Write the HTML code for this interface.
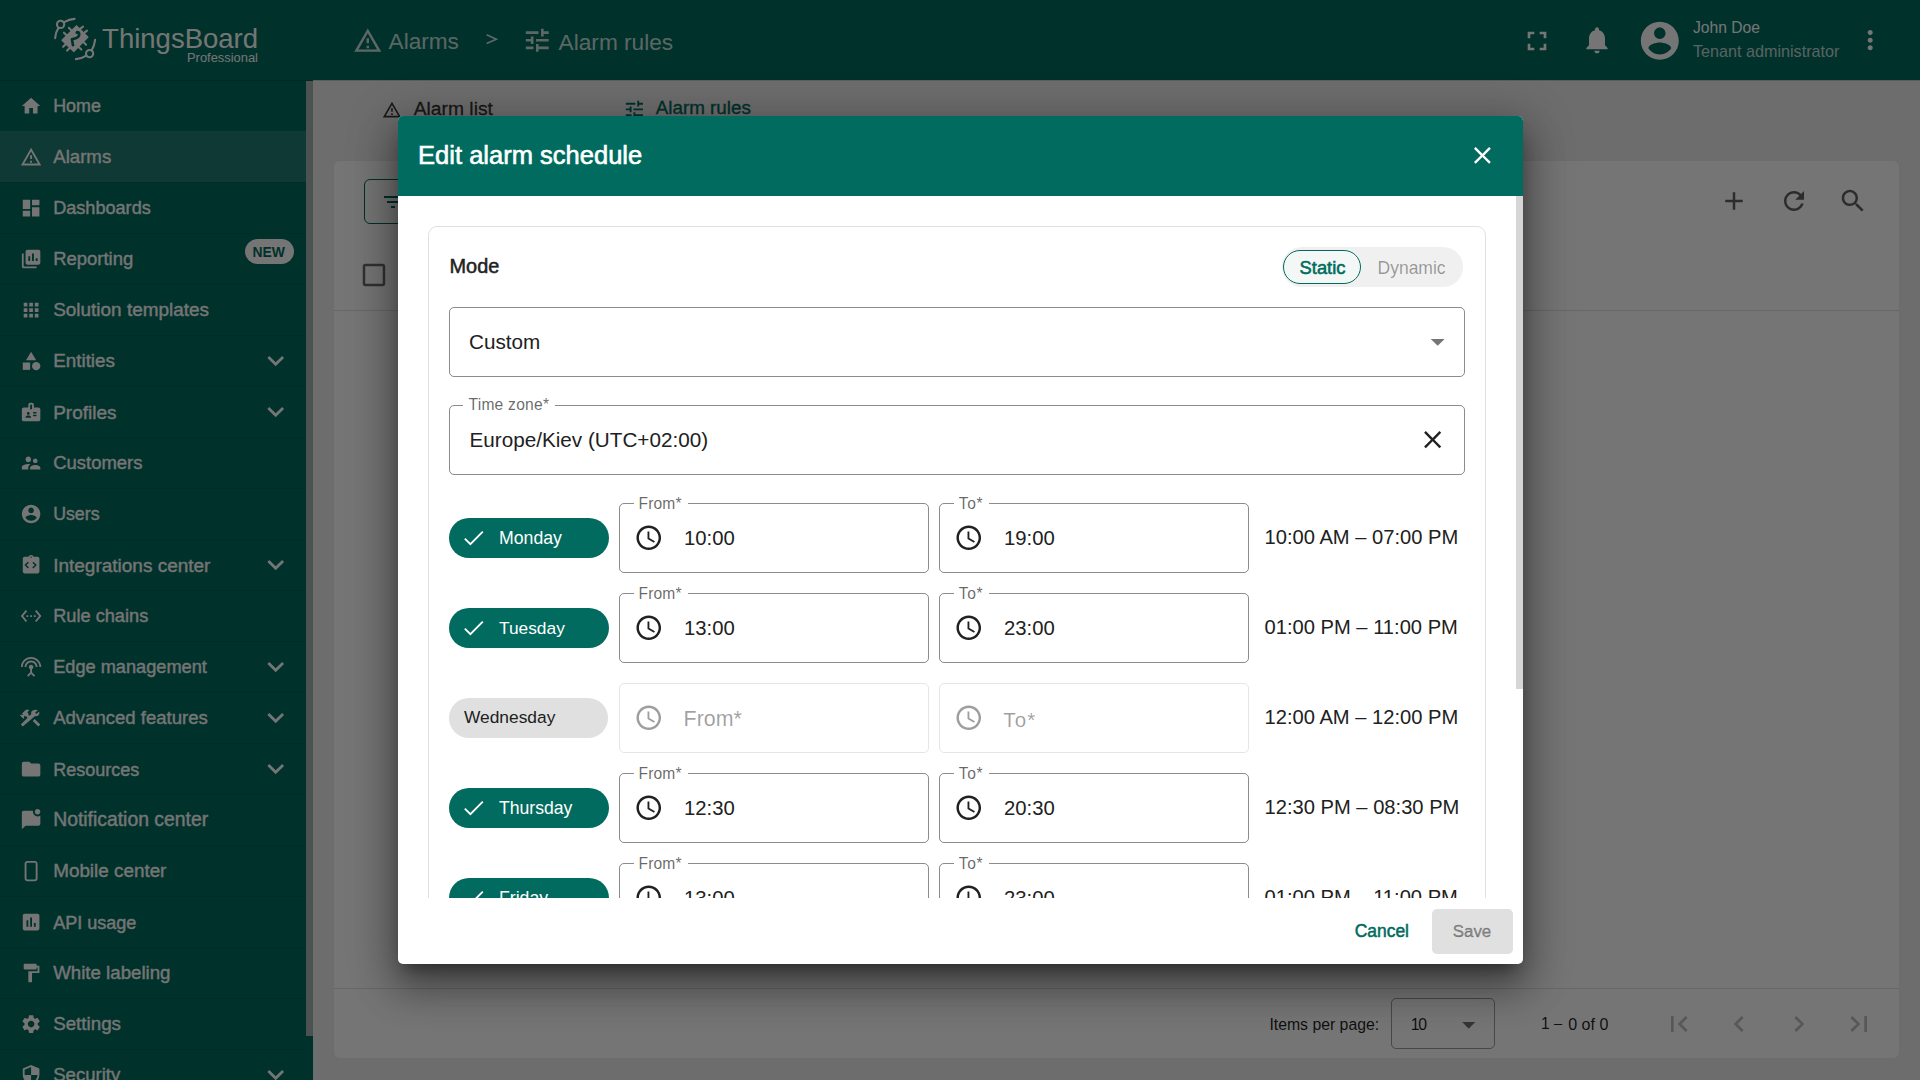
<!DOCTYPE html>
<html><head><meta charset="utf-8">
<style>
*{box-sizing:border-box;margin:0;padding:0}
html,body{width:1920px;height:1080px;overflow:hidden;font-family:"Liberation Sans",sans-serif;background:#eeeeee;position:relative}
.abs{position:absolute}
.tx{white-space:nowrap}
svg{display:block}
.nav{color:#fff;font-weight:bold}
</style></head><body>
<div class="abs" style="left:0;top:0;width:1920px;height:80px;background:#006b5e"></div>
<svg class="abs" style="left:50px;top:14px;width:50px;height:50px" viewBox="0 0 50 50">
<g fill="none" stroke="#fff" stroke-width="2.1" stroke-linecap="round">
<circle cx="10.6" cy="10.4" r="3.6"/><circle cx="39.6" cy="39.6" r="3.6"/>
<path d="M14.2 8.2 Q19 5.4 24.6 4.9"/><path d="M8.6 13.6 Q5.6 18 5.1 24.2"/>
<path d="M41.6 36.4 Q44.4 32 45.1 25.9"/><path d="M36.4 41.6 Q32 44.4 25.9 45.1"/>
<path d="M17.1 21.8 L13.95 18.65 M22 16.9 L18.85 13.75 M29.85 15.15 L33 12.7 M33.85 19.05 L37 16.6 M32.95 27.5 L36.1 30.65 M28.15 32.4 L31.3 35.55 M20.25 33.45 L17.1 36.6 M16.25 29.65 L13.1 32.8"/>
</g>
<path d="M26.4 11.8 L38 23.1 L23.8 37.5 L12 26.2 Z" fill="#fff" stroke="#fff" stroke-width="1.2" stroke-linejoin="round"/>
<path d="M26.4 18.2 Q29.6 17.6 29.2 20.8 Q28.8 23.4 25.8 24.2 L21.9 25.3 L23.2 32.2" fill="none" stroke="#006b5e" stroke-width="2.6" stroke-linejoin="round"/><circle cx="27.2" cy="18.6" r="1.7" fill="#006b5e"/>
</svg>
<div class="abs tx" style="left:102.10px;top:24.52px;font-size:27.50px;line-height:27.50px;color:#fff;font-weight:normal;">ThingsBoard</div>
<div class="abs tx" style="left:187.00px;top:51.78px;font-size:12.90px;line-height:12.90px;color:#fff;font-weight:normal;">Professional</div>
<svg class="abs" style="left:353.17px;top:25.54px;width:29.56px;height:29.56px;fill:rgba(255,255,255,0.8);" viewBox="0 0 24 24"><path d="M12 5.99L19.53 19H4.47L12 5.99M12 2L1 21h22L12 2zm1 14h-2v2h2v-2zm0-6h-2v4h2v-4z"/></svg>
<div class="abs tx" style="left:388.60px;top:30.62px;font-size:22.60px;line-height:22.60px;color:rgba(255,255,255,0.8);font-weight:normal;">Alarms</div>
<svg class="abs" style="left:480px;top:30px;width:24px;height:20px" viewBox="480 30 24 20"><path d="M486.6 34.8 L496.3 39.2 L486.6 43.6" fill="none" stroke="rgba(255,255,255,0.8)" stroke-width="1.7"/></svg>
<svg class="abs" style="left:521.98px;top:24.68px;width:30.53px;height:30.53px;fill:rgba(255,255,255,0.8);" viewBox="0 0 24 24"><path d="M3 17v2h6v-2H3zM3 5v2h10V5H3zm10 16v-2h8v-2h-8v-2h-2v6h2zM7 9v2H3v2h4v2h2V9H7zm14 4v-2H11v2h10zm-6-4h2V7h4V5h-4V3h-2v6z"/></svg>
<div class="abs tx" style="left:558.60px;top:30.56px;font-size:22.67px;line-height:22.67px;color:rgba(255,255,255,0.8);font-weight:normal;">Alarm rules</div>
<svg class="abs" style="left:1521.40px;top:24.70px;width:32.00px;height:32.00px;fill:#fff;" viewBox="0 0 24 24"><path d="M7 14H5v5h5v-2H7v-3zm-2-4h2V7h3V5H5v5zm12 7h-3v2h5v-5h-2v3zM14 5v2h3v3h2V5h-5z"/></svg>
<svg class="abs" style="left:1581.20px;top:24.20px;width:32.00px;height:32.00px;fill:#fff;" viewBox="0 0 24 24"><path d="M12 22c1.1 0 2-.9 2-2h-4c0 1.1.89 2 2 2zm6-6v-5c0-3.07-1.64-5.64-4.5-6.32V4c0-.83-.67-1.5-1.5-1.5s-1.5.67-1.5 1.5v.68C7.63 5.36 6 7.92 6 11v5l-2 2v1h16v-1l-2-2z"/></svg>
<svg class="abs" style="left:1637.20px;top:17.90px;width:45.60px;height:45.60px;fill:#fff;" viewBox="0 0 24 24"><path d="M12 2C6.48 2 2 6.48 2 12s4.48 10 10 10 10-4.48 10-10S17.52 2 12 2zm0 3c1.66 0 3 1.34 3 3s-1.34 3-3 3-3-1.34-3-3 1.34-3 3-3zm0 14.2c-2.5 0-4.71-1.28-6-3.22.03-1.99 4-3.08 6-3.08 1.99 0 5.97 1.09 6 3.08-1.29 1.94-3.5 3.22-6 3.22z"/></svg>
<div class="abs tx" style="left:1693.00px;top:20.05px;font-size:15.65px;line-height:15.65px;color:#fff;font-weight:normal;">John Doe</div>
<div class="abs tx" style="left:1693.00px;top:43.11px;font-size:16.17px;line-height:16.17px;color:rgba(255,255,255,0.75);font-weight:normal;">Tenant administrator</div>
<svg class="abs" style="left:1854.80px;top:24.80px;width:30.40px;height:30.40px;fill:#fff;" viewBox="0 0 24 24"><path d="M12 8c1.1 0 2-.9 2-2s-.9-2-2-2-2 .9-2 2 .9 2 2 2zm0 2c-1.1 0-2 .9-2 2s.9 2 2 2 2-.9 2-2-.9-2-2-2zm0 6c-1.1 0-2 .9-2 2s.9 2 2 2 2-.9 2-2-.9-2-2-2z"/></svg>
<div class="abs" style="left:0;top:80px;width:306px;height:1000px;background:#006b5e"></div>
<div class="abs" style="left:0;top:131px;width:306px;height:51px;background:rgba(255,255,255,0.12)"></div>
<svg class="abs" style="left:20.10px;top:94.80px;width:22.20px;height:22.20px;fill:#fff;" viewBox="0 0 24 24"><path d="M10 20v-6h4v6h5v-8h3L12 3 2 12h3v8z"/></svg>
<div class="abs tx" style="left:53.20px;top:97.68px;font-size:17.87px;line-height:17.87px;color:#fff;font-weight:normal;-webkit-text-stroke:0.35px #fff;">Home</div>
<svg class="abs" style="left:20.10px;top:145.80px;width:22.20px;height:22.20px;fill:#fff;" viewBox="0 0 24 24"><path d="M12 5.99L19.53 19H4.47L12 5.99M12 2L1 21h22L12 2zm1 14h-2v2h2v-2zm0-6h-2v4h2v-4z"/></svg>
<div class="abs tx" style="left:53.20px;top:148.00px;font-size:18.67px;line-height:18.67px;color:#fff;font-weight:normal;-webkit-text-stroke:0.35px #fff;">Alarms</div>
<div class="abs" style="left:0;top:182px;width:306px;height:1px;background:rgba(0,0,0,0.08)"></div>
<svg class="abs" style="left:20.10px;top:196.80px;width:22.20px;height:22.20px;fill:#fff;" viewBox="0 0 24 24"><path d="M3 13h8V3H3v10zm0 8h8v-6H3v6zm10 0h8V11h-8v10zm0-18v6h8V3h-8z"/></svg>
<div class="abs tx" style="left:53.20px;top:199.48px;font-size:18.10px;line-height:18.10px;color:#fff;font-weight:normal;-webkit-text-stroke:0.35px #fff;">Dashboards</div>
<div class="abs" style="left:0;top:233px;width:306px;height:1px;background:rgba(0,0,0,0.08)"></div>
<svg class="abs" style="left:20.10px;top:247.80px;width:22.20px;height:22.20px;fill:#fff;" viewBox="0 0 24 24"><path d="M4 6H2v14c0 1.1.9 2 2 2h14v-2H4V6z"/><path d="M20 2H8c-1.1 0-2 .9-2 2v12c0 1.1.9 2 2 2h12c1.1 0 2-.9 2-2V4c0-1.1-.9-2-2-2zM11 14H9V9h2v5zm4 0h-2V6h2v8zm4 0h-2v-3h2v3z"/></svg>
<div class="abs tx" style="left:53.20px;top:250.17px;font-size:18.47px;line-height:18.47px;color:#fff;font-weight:normal;-webkit-text-stroke:0.35px #fff;">Reporting</div>
<div class="abs" style="left:0;top:284px;width:306px;height:1px;background:rgba(0,0,0,0.08)"></div>
<svg class="abs" style="left:20.10px;top:298.80px;width:22.20px;height:22.20px;fill:#fff;" viewBox="0 0 24 24"><path d="M4 8h4V4H4v4zm6 12h4v-4h-4v4zm-6 0h4v-4H4v4zm0-6h4v-4H4v4zm6 0h4v-4h-4v4zm6-10v4h4V4h-4zm-6 4h4V4h-4v4zm6 6h4v-4h-4v4zm0 6h4v-4h-4v4z"/></svg>
<div class="abs tx" style="left:53.20px;top:300.77px;font-size:18.94px;line-height:18.94px;color:#fff;font-weight:normal;-webkit-text-stroke:0.35px #fff;">Solution templates</div>
<div class="abs" style="left:0;top:335px;width:306px;height:1px;background:rgba(0,0,0,0.08)"></div>
<svg class="abs" style="left:20.10px;top:349.80px;width:22.20px;height:22.20px;fill:#fff;" viewBox="0 0 24 24"><path d="M12 2l-5.5 9h11z"/><circle cx="17.5" cy="17.5" r="4.5"/><path d="M3 13.5h8v8H3z"/></svg>
<div class="abs tx" style="left:53.20px;top:351.85px;font-size:18.84px;line-height:18.84px;color:#fff;font-weight:normal;-webkit-text-stroke:0.35px #fff;">Entities</div>
<svg class="abs" style="left:259.00px;top:343.90px;width:33.40px;height:33.40px;fill:#fff;" viewBox="0 0 24 24"><path d="M16.59 8.59L12 13.17 7.41 8.59 6 10l6 6 6-6z"/></svg>
<div class="abs" style="left:0;top:386px;width:306px;height:1px;background:rgba(0,0,0,0.08)"></div>
<svg class="abs" style="left:20.10px;top:400.80px;width:22.20px;height:22.20px;fill:#fff;" viewBox="0 0 24 24"><path d="M20 7h-5V4c0-1.1-.9-2-2-2h-2c-1.1 0-2 .9-2 2v3H4c-1.1 0-2 .9-2 2v11c0 1.1.9 2 2 2h16c1.1 0 2-.9 2-2V9c0-1.1-.9-2-2-2zM9 12c.83 0 1.5.67 1.5 1.5S9.83 15 9 15s-1.5-.67-1.5-1.5S8.17 12 9 12zm3 6H6v-.43c0-.6.36-1.15.92-1.39.64-.28 1.34-.43 2.08-.43s1.44.15 2.08.43c.55.24.92.78.92 1.39V18zm1-9h-2V4h2v5zm4.25 7.5h-2.5c-.41 0-.75-.34-.75-.75s.34-.75.75-.75h2.5c.41 0 .75.34.75.75s-.34.75-.75.75zm0-3h-2.5c-.41 0-.75-.34-.75-.75s.34-.75.75-.75h2.5c.41 0 .75.34.75.75s-.34.75-.75.75z"/></svg>
<div class="abs tx" style="left:53.20px;top:402.73px;font-size:18.98px;line-height:18.98px;color:#fff;font-weight:normal;-webkit-text-stroke:0.35px #fff;">Profiles</div>
<svg class="abs" style="left:259.00px;top:394.90px;width:33.40px;height:33.40px;fill:#fff;" viewBox="0 0 24 24"><path d="M16.59 8.59L12 13.17 7.41 8.59 6 10l6 6 6-6z"/></svg>
<div class="abs" style="left:0;top:437px;width:306px;height:1px;background:rgba(0,0,0,0.08)"></div>
<svg class="abs" style="left:20.10px;top:451.80px;width:22.20px;height:22.20px;fill:#fff;" viewBox="0 0 24 24"><path d="M16.5 12c1.38 0 2.49-1.12 2.49-2.5S17.88 7 16.5 7C15.12 7 14 8.12 14 9.5s1.12 2.5 2.5 2.5zM9 11c1.66 0 2.99-1.34 2.99-3S10.66 5 9 5C7.34 5 6 6.34 6 8s1.34 3 3 3zm7.5 3c-1.83 0-5.5.92-5.5 2.75V19h11v-2.25c0-1.83-3.67-2.75-5.5-2.75zM9 13c-2.33 0-7 1.17-7 3.5V19h7v-2.25c0-.85.33-2.34 2.37-3.47C10.5 13.1 9.66 13 9 13z"/></svg>
<div class="abs tx" style="left:53.20px;top:454.17px;font-size:18.47px;line-height:18.47px;color:#fff;font-weight:normal;-webkit-text-stroke:0.35px #fff;">Customers</div>
<div class="abs" style="left:0;top:488px;width:306px;height:1px;background:rgba(0,0,0,0.08)"></div>
<svg class="abs" style="left:20.10px;top:502.80px;width:22.20px;height:22.20px;fill:#fff;" viewBox="0 0 24 24"><path d="M12 2C6.48 2 2 6.48 2 12s4.48 10 10 10 10-4.48 10-10S17.52 2 12 2zm0 3c1.66 0 3 1.34 3 3s-1.34 3-3 3-3-1.34-3-3 1.34-3 3-3zm0 14.2c-2.5 0-4.71-1.28-6-3.22.03-1.99 4-3.08 6-3.08 1.99 0 5.97 1.09 6 3.08-1.29 1.94-3.5 3.22-6 3.22z"/></svg>
<div class="abs tx" style="left:53.20px;top:505.78px;font-size:17.74px;line-height:17.74px;color:#fff;font-weight:normal;-webkit-text-stroke:0.35px #fff;">Users</div>
<div class="abs" style="left:0;top:539px;width:306px;height:1px;background:rgba(0,0,0,0.08)"></div>
<svg class="abs" style="left:20.10px;top:553.80px;width:22.20px;height:22.20px;fill:#fff;" viewBox="0 0 24 24"><path d="M19 3h-4.18C14.4 1.84 13.3 1 12 1s-2.4.84-2.82 2H5c-1.1 0-2 .9-2 2v14c0 1.1.9 2 2 2h14c1.1 0 2-.9 2-2V5c0-1.1-.9-2-2-2zm-7-.25c.41 0 .75.34.75.75s-.34.75-.75.75-.75-.34-.75-.75.34-.75.75-.75zM9.6 14.6L8.5 15.7 4.8 12l3.7-3.7 1.1 1.1L7 12l2.6 2.6zm4.8 1.1l-1.1-1.1L16 12l-2.6-2.6 1.1-1.1 3.7 3.7-3.8 3.7z"/></svg>
<div class="abs tx" style="left:53.20px;top:555.73px;font-size:18.99px;line-height:18.99px;color:#fff;font-weight:normal;-webkit-text-stroke:0.35px #fff;">Integrations center</div>
<svg class="abs" style="left:259.00px;top:547.90px;width:33.40px;height:33.40px;fill:#fff;" viewBox="0 0 24 24"><path d="M16.59 8.59L12 13.17 7.41 8.59 6 10l6 6 6-6z"/></svg>
<div class="abs" style="left:0;top:590px;width:306px;height:1px;background:rgba(0,0,0,0.08)"></div>
<svg class="abs" style="left:20.10px;top:604.80px;width:22.20px;height:22.20px;fill:#fff;" viewBox="0 0 24 24"><path d="M7.77 6.76L6.23 5.48.82 12l5.41 6.52 1.54-1.28L3.42 12l4.35-5.24zM7 13h2v-2H7v2zm10-2h-2v2h2v-2zm-6 2h2v-2h-2v2zm6.77-7.52l-1.54 1.28L20.58 12l-4.35 5.24 1.54 1.28L23.18 12l-5.41-6.52z"/></svg>
<div class="abs tx" style="left:53.20px;top:607.40px;font-size:18.19px;line-height:18.19px;color:#fff;font-weight:normal;-webkit-text-stroke:0.35px #fff;">Rule chains</div>
<div class="abs" style="left:0;top:641px;width:306px;height:1px;background:rgba(0,0,0,0.08)"></div>
<svg class="abs" style="left:20.10px;top:655.80px;width:22.20px;height:22.20px;fill:#fff;" viewBox="0 0 24 24"><path d="M12 5c-3.87 0-7 3.13-7 7h2c0-2.76 2.24-5 5-5s5 2.24 5 5h2c0-3.87-3.13-7-7-7zm1 9.29c.88-.39 1.5-1.26 1.5-2.29 0-1.38-1.12-2.5-2.5-2.5S9.5 10.62 9.5 12c0 1.02.62 1.9 1.5 2.29v3.3L7.59 21 9 22.41l3-3 3 3L16.41 21 13 17.59v-3.3zM12 1C5.93 1 1 5.93 1 12h2c0-4.97 4.03-9 9-9s9 4.03 9 9h2c0-6.07-4.93-11-11-11z"/></svg>
<div class="abs tx" style="left:53.20px;top:658.39px;font-size:18.20px;line-height:18.20px;color:#fff;font-weight:normal;-webkit-text-stroke:0.35px #fff;">Edge management</div>
<svg class="abs" style="left:259.00px;top:649.90px;width:33.40px;height:33.40px;fill:#fff;" viewBox="0 0 24 24"><path d="M16.59 8.59L12 13.17 7.41 8.59 6 10l6 6 6-6z"/></svg>
<div class="abs" style="left:0;top:692px;width:306px;height:1px;background:rgba(0,0,0,0.08)"></div>
<svg class="abs" style="left:20.10px;top:706.80px;width:22.20px;height:22.20px;fill:#fff;" viewBox="0 0 24 24"><path d="M13.78 15.17l2.12-2.12 6 6-2.12 2.12zM17.5 10c1.93 0 3.5-1.57 3.5-3.5 0-.58-.16-1.12-.41-1.6l-2.7 2.7-1.49-1.49 2.7-2.7c-.48-.25-1.02-.41-1.6-.41C13.57 3 12 4.57 12 6.5c0 .41.08.8.21 1.16l-1.85 1.85-1.78-1.78.71-.71-1.41-1.41L10 3.49c-1.17-1.17-3.07-1.17-4.24 0L2.22 7.03l1.41 1.41H.81l-.71.71 3.54 3.54.71-.71V9.15l1.41 1.41.71-.71 1.78 1.78-7.41 7.41 2.12 2.12L16.34 9.79c.36.13.75.21 1.16.21z"/></svg>
<div class="abs tx" style="left:53.20px;top:709.09px;font-size:18.56px;line-height:18.56px;color:#fff;font-weight:normal;-webkit-text-stroke:0.35px #fff;">Advanced features</div>
<svg class="abs" style="left:259.00px;top:700.90px;width:33.40px;height:33.40px;fill:#fff;" viewBox="0 0 24 24"><path d="M16.59 8.59L12 13.17 7.41 8.59 6 10l6 6 6-6z"/></svg>
<div class="abs" style="left:0;top:743px;width:306px;height:1px;background:rgba(0,0,0,0.08)"></div>
<svg class="abs" style="left:20.10px;top:757.80px;width:22.20px;height:22.20px;fill:#fff;" viewBox="0 0 24 24"><path d="M10 4H4c-1.1 0-1.99.9-1.99 2L2 18c0 1.1.9 2 2 2h16c1.1 0 2-.9 2-2V8c0-1.1-.9-2-2-2h-8l-2-2z"/></svg>
<div class="abs tx" style="left:53.20px;top:760.56px;font-size:18.00px;line-height:18.00px;color:#fff;font-weight:normal;-webkit-text-stroke:0.35px #fff;">Resources</div>
<svg class="abs" style="left:259.00px;top:751.90px;width:33.40px;height:33.40px;fill:#fff;" viewBox="0 0 24 24"><path d="M16.59 8.59L12 13.17 7.41 8.59 6 10l6 6 6-6z"/></svg>
<div class="abs" style="left:0;top:794px;width:306px;height:1px;background:rgba(0,0,0,0.08)"></div>
<svg class="abs" style="left:20.10px;top:808.80px;width:22.20px;height:22.20px;fill:#fff;" viewBox="0 0 24 24"><path d="M22 6.98V16c0 1.1-.9 2-2 2H6l-4 4V4c0-1.1.9-2 2-2h10.1c-.06.32-.1.66-.1 1 0 2.76 2.24 5 5 5 1.13 0 2.16-.39 3-1.02zM16 3c0 1.66 1.34 3 3 3s3-1.34 3-3-1.34-3-3-3-3 1.34-3 3z"/></svg>
<div class="abs tx" style="left:53.20px;top:810.40px;font-size:19.37px;line-height:19.37px;color:#fff;font-weight:normal;-webkit-text-stroke:0.35px #fff;">Notification center</div>
<div class="abs" style="left:0;top:845px;width:306px;height:1px;background:rgba(0,0,0,0.08)"></div>
<svg class="abs" style="left:20.10px;top:859.80px;width:22.20px;height:22.20px;fill:#fff;" viewBox="0 0 24 24"><path d="M16 1H8C6.34 1 5 2.34 5 4v16c0 1.66 1.34 3 3 3h8c1.66 0 3-1.34 3-3V4c0-1.66-1.34-3-3-3zm1 19c0 .55-.45 1-1 1H8c-.55 0-1-.45-1-1V4c0-.55.45-1 1-1h8c.55 0 1 .45 1 1v16z"/></svg>
<div class="abs tx" style="left:53.20px;top:861.83px;font-size:18.87px;line-height:18.87px;color:#fff;font-weight:normal;-webkit-text-stroke:0.35px #fff;">Mobile center</div>
<div class="abs" style="left:0;top:896px;width:306px;height:1px;background:rgba(0,0,0,0.08)"></div>
<svg class="abs" style="left:20.10px;top:910.80px;width:22.20px;height:22.20px;fill:#fff;" viewBox="0 0 24 24"><path d="M19 3H5c-1.1 0-2 .9-2 2v14c0 1.1.9 2 2 2h14c1.1 0 2-.9 2-2V5c0-1.1-.9-2-2-2zM9 17H7v-7h2v7zm4 0h-2V7h2v10zm4 0h-2v-4h2v4z"/></svg>
<div class="abs tx" style="left:53.20px;top:913.52px;font-size:18.05px;line-height:18.05px;color:#fff;font-weight:normal;-webkit-text-stroke:0.35px #fff;">API usage</div>
<div class="abs" style="left:0;top:947px;width:306px;height:1px;background:rgba(0,0,0,0.08)"></div>
<svg class="abs" style="left:20.10px;top:961.80px;width:22.20px;height:22.20px;fill:#fff;" viewBox="0 0 24 24"><path d="M18 4V3c0-.55-.45-1-1-1H5c-.55 0-1 .45-1 1v4c0 .55.45 1 1 1h12c.55 0 1-.45 1-1V6h1v4H9v11c0 .55.45 1 1 1h2c.55 0 1-.45 1-1v-9h8V4h-3z"/></svg>
<div class="abs tx" style="left:53.20px;top:963.99px;font-size:18.68px;line-height:18.68px;color:#fff;font-weight:normal;-webkit-text-stroke:0.35px #fff;">White labeling</div>
<div class="abs" style="left:0;top:998px;width:306px;height:1px;background:rgba(0,0,0,0.08)"></div>
<svg class="abs" style="left:20.10px;top:1012.80px;width:22.20px;height:22.20px;fill:#fff;" viewBox="0 0 24 24"><path d="M19.14 12.94c.04-.3.06-.61.06-.94 0-.32-.02-.64-.07-.94l2.03-1.58c.18-.14.23-.41.12-.61l-1.92-3.32c-.12-.22-.37-.29-.59-.22l-2.39.96c-.5-.38-1.03-.7-1.62-.94l-.36-2.54c-.04-.24-.24-.41-.48-.41h-3.84c-.24 0-.43.17-.47.41l-.36 2.54c-.59.24-1.13.57-1.62.94l-2.39-.96c-.22-.08-.47 0-.59.22L2.74 8.87c-.12.21-.08.47.12.61l2.03 1.58c-.05.3-.09.63-.09.94s.02.64.07.94l-2.03 1.58c-.18.14-.23.41-.12.61l1.92 3.32c.12.22.37.29.59.22l2.39-.96c.5.38 1.03.7 1.62.94l.36 2.54c.05.24.24.41.48.41h3.84c.24 0 .44-.17.47-.41l.36-2.54c.59-.24 1.13-.56 1.62-.94l2.39.96c.22.08.47 0 .59-.22l1.92-3.32c.12-.22.07-.47-.12-.61l-2.01-1.58zM12 15.6c-1.98 0-3.6-1.62-3.6-3.6s1.62-3.6 3.6-3.6 3.6 1.62 3.6 3.6-1.62 3.6-3.6 3.6z"/></svg>
<div class="abs tx" style="left:53.20px;top:1014.92px;font-size:18.76px;line-height:18.76px;color:#fff;font-weight:normal;-webkit-text-stroke:0.35px #fff;">Settings</div>
<div class="abs" style="left:0;top:1049px;width:306px;height:1px;background:rgba(0,0,0,0.08)"></div>
<svg class="abs" style="left:20.10px;top:1063.80px;width:22.20px;height:22.20px;fill:#fff;" viewBox="0 0 24 24"><path d="M12 1L3 5v6c0 5.55 3.84 10.74 9 12 5.16-1.26 9-6.45 9-12V5l-9-4zm0 10.99h7c-.53 4.12-3.28 7.79-7 8.94V12H5V6.3l7-3.11v8.8z"/></svg>
<div class="abs tx" style="left:53.20px;top:1066.08px;font-size:18.57px;line-height:18.57px;color:#fff;font-weight:normal;-webkit-text-stroke:0.35px #fff;">Security</div>
<svg class="abs" style="left:259.00px;top:1057.90px;width:33.40px;height:33.40px;fill:#fff;" viewBox="0 0 24 24"><path d="M16.59 8.59L12 13.17 7.41 8.59 6 10l6 6 6-6z"/></svg>
<div class="abs" style="left:244.5px;top:239.3px;width:49px;height:25px;border-radius:13px;background:#fff"></div>
<div class="abs tx" style="left:252.50px;top:246.22px;font-size:13.92px;line-height:13.92px;color:#006b5e;font-weight:bold;">NEW</div>
<div class="abs" style="left:306px;top:80px;width:7px;height:1000px;background:#006b5e"></div>
<div class="abs" style="left:306px;top:81px;width:7px;height:955px;background:#a3b3b0"></div>
<div class="abs" style="left:313px;top:80px;width:1607px;height:1000px;background:#eeeeee"></div>
<div class="abs" style="left:0;top:80px;width:1920px;height:1px;background:rgba(0,0,0,0.15)"></div>
<svg class="abs" style="left:381.67px;top:99.84px;width:19.96px;height:19.96px;fill:rgba(0,0,0,0.76);" viewBox="0 0 24 24"><path d="M12 5.99L19.53 19H4.47L12 5.99M12 2L1 21h22L12 2zm1 14h-2v2h2v-2zm0-6h-2v4h2v-4z"/></svg>
<div class="abs tx" style="left:413.75px;top:99.10px;font-size:19.26px;line-height:19.26px;color:rgba(0,0,0,0.76);font-weight:normal;-webkit-text-stroke:0.35px rgba(0,0,0,0.76);">Alarm list</div>
<svg class="abs" style="left:622.95px;top:98.15px;width:22.80px;height:22.80px;fill:#006b5e;" viewBox="0 0 24 24"><path d="M3 17v2h6v-2H3zM3 5v2h10V5H3zm10 16v-2h8v-2h-8v-2h-2v6h2zM7 9v2H3v2h4v2h2V9H7zm14 4v-2H11v2h10zm-6-4h2V7h4V5h-4V3h-2v6z"/></svg>
<div class="abs tx" style="left:655.80px;top:99.49px;font-size:18.79px;line-height:18.79px;color:#006b5e;font-weight:normal;-webkit-text-stroke:0.35px #006b5e;">Alarm rules</div>
<div class="abs" style="left:334px;top:161px;width:1565px;height:897px;background:#fff;border-radius:5px;box-shadow:0 0 1px rgba(0,0,0,.12)"></div>
<div class="abs" style="left:364px;top:179px;width:120px;height:45px;border:1.4px solid #006b5e;border-radius:6px"></div>
<svg class="abs" style="left:380.80px;top:189.50px;width:24.00px;height:24.00px;fill:#006b5e;" viewBox="0 0 24 24"><path d="M10 18h4v-2h-4v2zM3 6v2h18V6H3zm3 7h12v-2H6v2z"/></svg>
<svg class="abs" style="left:1719.00px;top:186.00px;width:30.00px;height:30.00px;fill:rgba(0,0,0,0.62);" viewBox="0 0 24 24"><path d="M19 13h-6v6h-2v-6H5v-2h6V5h2v6h6v2z"/></svg>
<svg class="abs" style="left:1779.00px;top:186.00px;width:30.00px;height:30.00px;fill:rgba(0,0,0,0.62);" viewBox="0 0 24 24"><path d="M17.65 6.35C16.2 4.9 14.21 4 12 4c-4.42 0-7.99 3.58-7.99 8s3.57 8 7.99 8c3.73 0 6.84-2.55 7.73-6h-2.08c-.82 2.33-3.04 4-5.65 4-3.31 0-6-2.69-6-6s2.69-6 6-6c1.66 0 3.14.69 4.22 1.78L13 11h7V4l-2.35 2.35z"/></svg>
<svg class="abs" style="left:1838.00px;top:186.00px;width:30.00px;height:30.00px;fill:rgba(0,0,0,0.62);" viewBox="0 0 24 24"><path d="M15.5 14h-.79l-.28-.27C15.41 12.59 16 11.11 16 9.5 16 5.91 13.09 3 9.5 3S3 5.91 3 9.5 5.91 16 9.5 16c1.61 0 3.09-.59 4.23-1.57l.27.28v.79l5 4.99L20.49 19l-4.99-5zm-6 0C7.01 14 5 11.99 5 9.5S7.01 5 9.5 5 14 7.01 14 9.5 11.99 14 9.5 14z"/></svg>
<div class="abs" style="left:334px;top:310px;width:1565px;height:1px;background:rgba(0,0,0,0.12)"></div>
<svg class="abs" style="left:358.55px;top:260.25px;width:30.00px;height:30.00px;fill:rgba(0,0,0,0.58);" viewBox="0 0 24 24"><path d="M19 5v14H5V5h14m0-2H5c-1.1 0-2 .9-2 2v14c0 1.1.9 2 2 2h14c1.1 0 2-.9 2-2V5c0-1.1-.9-2-2-2z"/></svg>
<div class="abs" style="left:334px;top:988px;width:1565px;height:1px;background:rgba(0,0,0,0.12)"></div>
<div class="abs tx" style="left:1269.40px;top:1016.83px;font-size:15.80px;line-height:15.80px;color:rgba(0,0,0,0.87);font-weight:normal;">Items per page:</div>
<div class="abs" style="left:1390.5px;top:998.2px;width:104px;height:51px;border:1px solid rgba(0,0,0,0.38);border-radius:5px"></div>
<div class="abs tx" style="left:1410.70px;top:1016.63px;font-size:15.80px;line-height:15.80px;color:rgba(0,0,0,0.87);font-weight:normal;letter-spacing:-1.2380000000000493px;">10</div>
<svg class="abs" style="left:1453.33px;top:1008.90px;width:31.44px;height:31.44px;fill:rgba(0,0,0,0.54);" viewBox="0 0 24 24"><path d="M7 10l5 5 5-5z"/></svg>
<div class="abs tx" style="left:1541.00px;top:1016.39px;font-size:15.60px;line-height:15.60px;color:rgba(0,0,0,0.87);font-weight:normal;letter-spacing:-3.2579999999999103px;">1</div>
<div class="abs tx" style="left:1553.90px;top:1015.80px;font-size:14.64px;line-height:14.64px;color:rgba(0,0,0,0.87);font-weight:normal;">–</div>
<div class="abs tx" style="left:1568.20px;top:1016.02px;font-size:16.04px;line-height:16.04px;color:rgba(0,0,0,0.87);font-weight:normal;">0 of 0</div>
<svg class="abs" style="left:1663.00px;top:1008.00px;width:32.00px;height:32.00px;fill:rgba(0,0,0,0.26);" viewBox="0 0 24 24"><path d="M18.41 16.59L13.82 12l4.59-4.59L17 6l-6 6 6 6zM6 6h2v12H6z"/></svg>
<svg class="abs" style="left:1722.80px;top:1008.00px;width:32.00px;height:32.00px;fill:rgba(0,0,0,0.26);" viewBox="0 0 24 24"><path d="M15.41 7.41L14 6l-6 6 6 6 1.41-1.41L10.83 12z"/></svg>
<svg class="abs" style="left:1782.80px;top:1008.00px;width:32.00px;height:32.00px;fill:rgba(0,0,0,0.26);" viewBox="0 0 24 24"><path d="M10 6L8.59 7.41 13.17 12l-4.58 4.59L10 18l6-6z"/></svg>
<svg class="abs" style="left:1842.80px;top:1008.00px;width:32.00px;height:32.00px;fill:rgba(0,0,0,0.26);" viewBox="0 0 24 24"><path d="M5.59 7.41L10.18 12l-4.59 4.59L7 18l6-6-6-6zM16 6h2v12h-2z"/></svg>
<div class="abs" style="left:0;top:0;width:1920px;height:1080px;background:rgba(0,0,0,0.54)"></div>
<div class="abs" style="left:397.8px;top:115.8px;width:1125.4px;height:848px;background:#fff;border-radius:5px;overflow:hidden;box-shadow:0 11px 15px -7px rgba(0,0,0,.4),0 24px 38px 3px rgba(0,0,0,.28),0 9px 46px 8px rgba(0,0,0,.22)"><div class="abs" style="left:0;top:0;width:1125px;height:80px;background:#006b5e"></div><div class="abs tx" style="left:20.30px;top:26.80px;font-size:25.52px;line-height:25.52px;color:#fff;font-weight:normal;-webkit-text-stroke:0.6px #fff;">Edit alarm schedule</div><svg class="abs" style="left:1070.20px;top:25.40px;width:28.80px;height:28.80px;fill:#fff;" viewBox="0 0 24 24"><path d="M19 6.41L17.59 5 12 10.59 6.41 5 5 6.41 10.59 12 5 17.59 6.41 19 12 13.41 17.59 19 19 17.59 13.41 12z"/></svg><div class="abs" style="left:0;top:80px;width:1125px;height:702px;overflow:hidden"><div class="abs" style="left:0;top:-80px;width:1125px;height:1400px"><div class="abs" style="left:30.30px;top:110.00px;width:1057.70px;height:1074.00px;border:1px solid #e0e0e0;border-radius:9px"></div><div class="abs tx" style="left:51.70px;top:141.34px;font-size:19.92px;line-height:19.92px;color:#212121;font-weight:normal;-webkit-text-stroke:0.5px #212121;">Mode</div><div class="abs" style="left:884.00px;top:131.10px;width:181.70px;height:39.65px;background:#f0f0f0;border-radius:20px"></div><div class="abs" style="left:885.20px;top:134.00px;width:78.50px;height:34.70px;background:#f3f8f7;border:1.3px solid #006b5e;border-radius:18px"></div><div class="abs tx" style="left:901.80px;top:143.09px;font-size:18.32px;line-height:18.32px;color:#006b5e;font-weight:normal;-webkit-text-stroke:0.55px #006b5e;">Static</div><div class="abs tx" style="left:979.70px;top:143.76px;font-size:17.53px;line-height:17.53px;color:rgba(0,0,0,0.38);font-weight:normal;">Dynamic</div><div class="abs" style="left:51.00px;top:191.00px;width:1016.00px;height:70.00px;border:1px solid rgba(0,0,0,0.45);border-radius:5px"></div><div class="abs tx" style="left:71.20px;top:216.48px;font-size:20.70px;line-height:20.70px;color:#212121;font-weight:normal;">Custom</div><svg class="abs" style="left:1023.37px;top:209.30px;width:33.36px;height:33.36px;fill:rgba(0,0,0,0.54);" viewBox="0 0 24 24"><path d="M7 10l5 5 5-5z"/></svg><div class="abs" style="left:51.00px;top:289.00px;width:1016.00px;height:70.00px;border:1px solid rgba(0,0,0,0.45);border-radius:5px"></div><div class="abs" style="left:65.30px;top:287.00px;width:91.70px;height:4.00px;background:#fff"></div><div class="abs tx" style="left:70.70px;top:281.59px;font-size:15.60px;line-height:15.60px;color:rgba(0,0,0,0.6);font-weight:normal;letter-spacing:0.2431111111111177px;">Time zone*</div><div class="abs tx" style="left:71.70px;top:313.98px;font-size:20.70px;line-height:20.70px;color:#212121;font-weight:normal;">Europe/Kiev (UTC+02:00)</div><svg class="abs" style="left:1020.49px;top:309.09px;width:29.31px;height:29.31px;fill:#212121;" viewBox="0 0 24 24"><path d="M19 6.41L17.59 5 12 10.59 6.41 5 5 6.41 10.59 12 5 17.59 6.41 19 12 13.41 17.59 19 19 17.59 13.41 12z"/></svg><div class="abs" style="left:51.00px;top:402.00px;width:160.20px;height:40.00px;background:#006b5e;border-radius:20px"></div><svg class="abs" style="left:65px;top:413px;width:22px;height:18px" viewBox="0 0 22 18"><path d="M1.8 9.6 L7.4 15.1 L19.8 2.6" fill="none" stroke="#fff" stroke-width="1.9"/></svg><div class="abs tx" style="left:101.20px;top:413.82px;font-size:17.70px;line-height:17.70px;color:#fff;font-weight:normal;">Monday</div><div class="abs" style="left:221.00px;top:387.00px;width:310.00px;height:70.00px;border:1px solid rgba(0,0,0,0.45);border-radius:5px"></div><div class="abs" style="left:235.80px;top:385.00px;width:54.20px;height:4.00px;background:#fff"></div><div class="abs tx" style="left:240.70px;top:379.89px;font-size:15.60px;line-height:15.60px;color:rgba(0,0,0,0.6);font-weight:normal;letter-spacing:0.14199999999999946px;">From*</div><div class="abs" style="left:541.00px;top:387.00px;width:310.00px;height:70.00px;border:1px solid rgba(0,0,0,0.45);border-radius:5px"></div><div class="abs" style="left:555.75px;top:385.00px;width:35.45px;height:4.00px;background:#fff"></div><div class="abs tx" style="left:561.00px;top:379.89px;font-size:15.60px;line-height:15.60px;color:rgba(0,0,0,0.6);font-weight:normal;letter-spacing:0.6789999999999878px;">To*</div><svg class="abs" style="left:236.24px;top:407.04px;width:29.52px;height:29.52px;fill:#212121;" viewBox="0 0 24 24"><path d="M11.99 2C6.47 2 2 6.48 2 12s4.47 10 9.99 10C17.52 22 22 17.52 22 12S17.52 2 11.99 2zM12 20c-4.42 0-8-3.58-8-8s3.58-8 8-8 8 3.58 8 8-3.58 8-8 8zm.5-13H11v6l5.25 3.15.75-1.23-4.5-2.67z"/></svg><svg class="abs" style="left:556.04px;top:407.04px;width:29.52px;height:29.52px;fill:#212121;" viewBox="0 0 24 24"><path d="M11.99 2C6.47 2 2 6.48 2 12s4.47 10 9.99 10C17.52 22 22 17.52 22 12S17.52 2 11.99 2zM12 20c-4.42 0-8-3.58-8-8s3.58-8 8-8 8 3.58 8 8-3.58 8-8 8zm.5-13H11v6l5.25 3.15.75-1.23-4.5-2.67z"/></svg><div class="abs tx" style="left:286.20px;top:412.03px;font-size:20.28px;line-height:20.28px;color:#212121;font-weight:normal;">10:00</div><div class="abs tx" style="left:606.20px;top:412.02px;font-size:20.30px;line-height:20.30px;color:#212121;font-weight:normal;">19:00</div><div class="abs tx" style="left:866.75px;top:411.69px;font-size:20.15px;line-height:20.15px;color:#212121;font-weight:normal;">10:00 AM – 07:00 PM</div><div class="abs" style="left:51.00px;top:492.00px;width:160.20px;height:40.00px;background:#006b5e;border-radius:20px"></div><svg class="abs" style="left:65px;top:503px;width:22px;height:18px" viewBox="0 0 22 18"><path d="M1.8 9.6 L7.4 15.1 L19.8 2.6" fill="none" stroke="#fff" stroke-width="1.9"/></svg><div class="abs tx" style="left:101.20px;top:504.12px;font-size:17.34px;line-height:17.34px;color:#fff;font-weight:normal;">Tuesday</div><div class="abs" style="left:221.00px;top:477.00px;width:310.00px;height:70.00px;border:1px solid rgba(0,0,0,0.45);border-radius:5px"></div><div class="abs" style="left:235.80px;top:475.00px;width:54.20px;height:4.00px;background:#fff"></div><div class="abs tx" style="left:240.70px;top:469.89px;font-size:15.60px;line-height:15.60px;color:rgba(0,0,0,0.6);font-weight:normal;letter-spacing:0.14199999999999946px;">From*</div><div class="abs" style="left:541.00px;top:477.00px;width:310.00px;height:70.00px;border:1px solid rgba(0,0,0,0.45);border-radius:5px"></div><div class="abs" style="left:555.75px;top:475.00px;width:35.45px;height:4.00px;background:#fff"></div><div class="abs tx" style="left:561.00px;top:469.89px;font-size:15.60px;line-height:15.60px;color:rgba(0,0,0,0.6);font-weight:normal;letter-spacing:0.6789999999999878px;">To*</div><svg class="abs" style="left:236.24px;top:497.04px;width:29.52px;height:29.52px;fill:#212121;" viewBox="0 0 24 24"><path d="M11.99 2C6.47 2 2 6.48 2 12s4.47 10 9.99 10C17.52 22 22 17.52 22 12S17.52 2 11.99 2zM12 20c-4.42 0-8-3.58-8-8s3.58-8 8-8 8 3.58 8 8-3.58 8-8 8zm.5-13H11v6l5.25 3.15.75-1.23-4.5-2.67z"/></svg><svg class="abs" style="left:556.04px;top:497.04px;width:29.52px;height:29.52px;fill:#212121;" viewBox="0 0 24 24"><path d="M11.99 2C6.47 2 2 6.48 2 12s4.47 10 9.99 10C17.52 22 22 17.52 22 12S17.52 2 11.99 2zM12 20c-4.42 0-8-3.58-8-8s3.58-8 8-8 8 3.58 8 8-3.58 8-8 8zm.5-13H11v6l5.25 3.15.75-1.23-4.5-2.67z"/></svg><div class="abs tx" style="left:286.20px;top:502.03px;font-size:20.28px;line-height:20.28px;color:#212121;font-weight:normal;">13:00</div><div class="abs tx" style="left:606.20px;top:502.02px;font-size:20.30px;line-height:20.30px;color:#212121;font-weight:normal;">23:00</div><div class="abs tx" style="left:866.75px;top:501.69px;font-size:20.15px;line-height:20.15px;color:#212121;font-weight:normal;">01:00 PM – 11:00 PM</div><div class="abs" style="left:51.00px;top:582.00px;width:159.50px;height:40.00px;background:#e0e0e0;border-radius:20px"></div><div class="abs tx" style="left:66.20px;top:593.10px;font-size:17.36px;line-height:17.36px;color:#212121;font-weight:normal;">Wednesday</div><div class="abs" style="left:221.00px;top:567.00px;width:310.00px;height:70.00px;border:1px solid rgba(0,0,0,0.1);border-radius:5px"></div><div class="abs" style="left:541.00px;top:567.00px;width:310.00px;height:70.00px;border:1px solid rgba(0,0,0,0.1);border-radius:5px"></div><svg class="abs" style="left:236.24px;top:587.04px;width:29.52px;height:29.52px;fill:rgba(0,0,0,0.38);" viewBox="0 0 24 24"><path d="M11.99 2C6.47 2 2 6.48 2 12s4.47 10 9.99 10C17.52 22 22 17.52 22 12S17.52 2 11.99 2zM12 20c-4.42 0-8-3.58-8-8s3.58-8 8-8 8 3.58 8 8-3.58 8-8 8zm.5-13H11v6l5.25 3.15.75-1.23-4.5-2.67z"/></svg><svg class="abs" style="left:556.04px;top:587.04px;width:29.52px;height:29.52px;fill:rgba(0,0,0,0.38);" viewBox="0 0 24 24"><path d="M11.99 2C6.47 2 2 6.48 2 12s4.47 10 9.99 10C17.52 22 22 17.52 22 12S17.52 2 11.99 2zM12 20c-4.42 0-8-3.58-8-8s3.58-8 8-8 8 3.58 8 8-3.58 8-8 8zm.5-13H11v6l5.25 3.15.75-1.23-4.5-2.67z"/></svg><div class="abs tx" style="left:285.80px;top:593.12px;font-size:21.36px;line-height:21.36px;color:rgba(0,0,0,0.38);font-weight:normal;">From*</div><div class="abs tx" style="left:605.50px;top:593.85px;font-size:20.50px;line-height:20.50px;color:rgba(0,0,0,0.38);font-weight:normal;letter-spacing:1.1887499999999989px;">To*</div><div class="abs tx" style="left:866.75px;top:591.69px;font-size:20.15px;line-height:20.15px;color:#212121;font-weight:normal;">12:00 AM – 12:00 PM</div><div class="abs" style="left:51.00px;top:672.00px;width:160.20px;height:40.00px;background:#006b5e;border-radius:20px"></div><svg class="abs" style="left:65px;top:683px;width:22px;height:18px" viewBox="0 0 22 18"><path d="M1.8 9.6 L7.4 15.1 L19.8 2.6" fill="none" stroke="#fff" stroke-width="1.9"/></svg><div class="abs tx" style="left:101.20px;top:683.88px;font-size:17.63px;line-height:17.63px;color:#fff;font-weight:normal;">Thursday</div><div class="abs" style="left:221.00px;top:657.00px;width:310.00px;height:70.00px;border:1px solid rgba(0,0,0,0.45);border-radius:5px"></div><div class="abs" style="left:235.80px;top:655.00px;width:54.20px;height:4.00px;background:#fff"></div><div class="abs tx" style="left:240.70px;top:649.89px;font-size:15.60px;line-height:15.60px;color:rgba(0,0,0,0.6);font-weight:normal;letter-spacing:0.14199999999999946px;">From*</div><div class="abs" style="left:541.00px;top:657.00px;width:310.00px;height:70.00px;border:1px solid rgba(0,0,0,0.45);border-radius:5px"></div><div class="abs" style="left:555.75px;top:655.00px;width:35.45px;height:4.00px;background:#fff"></div><div class="abs tx" style="left:561.00px;top:649.89px;font-size:15.60px;line-height:15.60px;color:rgba(0,0,0,0.6);font-weight:normal;letter-spacing:0.6789999999999878px;">To*</div><svg class="abs" style="left:236.24px;top:677.04px;width:29.52px;height:29.52px;fill:#212121;" viewBox="0 0 24 24"><path d="M11.99 2C6.47 2 2 6.48 2 12s4.47 10 9.99 10C17.52 22 22 17.52 22 12S17.52 2 11.99 2zM12 20c-4.42 0-8-3.58-8-8s3.58-8 8-8 8 3.58 8 8-3.58 8-8 8zm.5-13H11v6l5.25 3.15.75-1.23-4.5-2.67z"/></svg><svg class="abs" style="left:556.04px;top:677.04px;width:29.52px;height:29.52px;fill:#212121;" viewBox="0 0 24 24"><path d="M11.99 2C6.47 2 2 6.48 2 12s4.47 10 9.99 10C17.52 22 22 17.52 22 12S17.52 2 11.99 2zM12 20c-4.42 0-8-3.58-8-8s3.58-8 8-8 8 3.58 8 8-3.58 8-8 8zm.5-13H11v6l5.25 3.15.75-1.23-4.5-2.67z"/></svg><div class="abs tx" style="left:286.20px;top:682.03px;font-size:20.28px;line-height:20.28px;color:#212121;font-weight:normal;">12:30</div><div class="abs tx" style="left:606.20px;top:682.02px;font-size:20.30px;line-height:20.30px;color:#212121;font-weight:normal;">20:30</div><div class="abs tx" style="left:866.75px;top:681.69px;font-size:20.15px;line-height:20.15px;color:#212121;font-weight:normal;">12:30 PM – 08:30 PM</div><div class="abs" style="left:51.00px;top:762.00px;width:160.20px;height:40.00px;background:#006b5e;border-radius:20px"></div><svg class="abs" style="left:65px;top:773px;width:22px;height:18px" viewBox="0 0 22 18"><path d="M1.8 9.6 L7.4 15.1 L19.8 2.6" fill="none" stroke="#fff" stroke-width="1.9"/></svg><div class="abs tx" style="left:101.20px;top:773.82px;font-size:17.70px;line-height:17.70px;color:#fff;font-weight:normal;">Friday</div><div class="abs" style="left:221.00px;top:747.00px;width:310.00px;height:70.00px;border:1px solid rgba(0,0,0,0.45);border-radius:5px"></div><div class="abs" style="left:235.80px;top:745.00px;width:54.20px;height:4.00px;background:#fff"></div><div class="abs tx" style="left:240.70px;top:739.89px;font-size:15.60px;line-height:15.60px;color:rgba(0,0,0,0.6);font-weight:normal;letter-spacing:0.14199999999999946px;">From*</div><div class="abs" style="left:541.00px;top:747.00px;width:310.00px;height:70.00px;border:1px solid rgba(0,0,0,0.45);border-radius:5px"></div><div class="abs" style="left:555.75px;top:745.00px;width:35.45px;height:4.00px;background:#fff"></div><div class="abs tx" style="left:561.00px;top:739.89px;font-size:15.60px;line-height:15.60px;color:rgba(0,0,0,0.6);font-weight:normal;letter-spacing:0.6789999999999878px;">To*</div><svg class="abs" style="left:236.24px;top:767.04px;width:29.52px;height:29.52px;fill:#212121;" viewBox="0 0 24 24"><path d="M11.99 2C6.47 2 2 6.48 2 12s4.47 10 9.99 10C17.52 22 22 17.52 22 12S17.52 2 11.99 2zM12 20c-4.42 0-8-3.58-8-8s3.58-8 8-8 8 3.58 8 8-3.58 8-8 8zm.5-13H11v6l5.25 3.15.75-1.23-4.5-2.67z"/></svg><svg class="abs" style="left:556.04px;top:767.04px;width:29.52px;height:29.52px;fill:#212121;" viewBox="0 0 24 24"><path d="M11.99 2C6.47 2 2 6.48 2 12s4.47 10 9.99 10C17.52 22 22 17.52 22 12S17.52 2 11.99 2zM12 20c-4.42 0-8-3.58-8-8s3.58-8 8-8 8 3.58 8 8-3.58 8-8 8zm.5-13H11v6l5.25 3.15.75-1.23-4.5-2.67z"/></svg><div class="abs tx" style="left:286.20px;top:772.03px;font-size:20.28px;line-height:20.28px;color:#212121;font-weight:normal;">13:00</div><div class="abs tx" style="left:606.20px;top:772.02px;font-size:20.30px;line-height:20.30px;color:#212121;font-weight:normal;">23:00</div><div class="abs tx" style="left:866.75px;top:771.69px;font-size:20.15px;line-height:20.15px;color:#212121;font-weight:normal;">01:00 PM – 11:00 PM</div></div></div><div class="abs" style="left:1118.00px;top:80.00px;width:7.00px;height:493.00px;background:#d6d6d6"></div><div class="abs tx" style="left:956.90px;top:807.52px;font-size:17.46px;line-height:17.46px;color:#006b5e;font-weight:normal;-webkit-text-stroke:0.5px #006b5e;">Cancel</div><div class="abs" style="left:1034.00px;top:793.10px;width:81.00px;height:44.80px;background:#e0e0e0;border-radius:5px"></div><div class="abs tx" style="left:1054.90px;top:807.97px;font-size:16.93px;line-height:16.93px;color:rgba(0,0,0,0.38);font-weight:normal;-webkit-text-stroke:0.5px rgba(0,0,0,0.38);">Save</div></div>
</body></html>
